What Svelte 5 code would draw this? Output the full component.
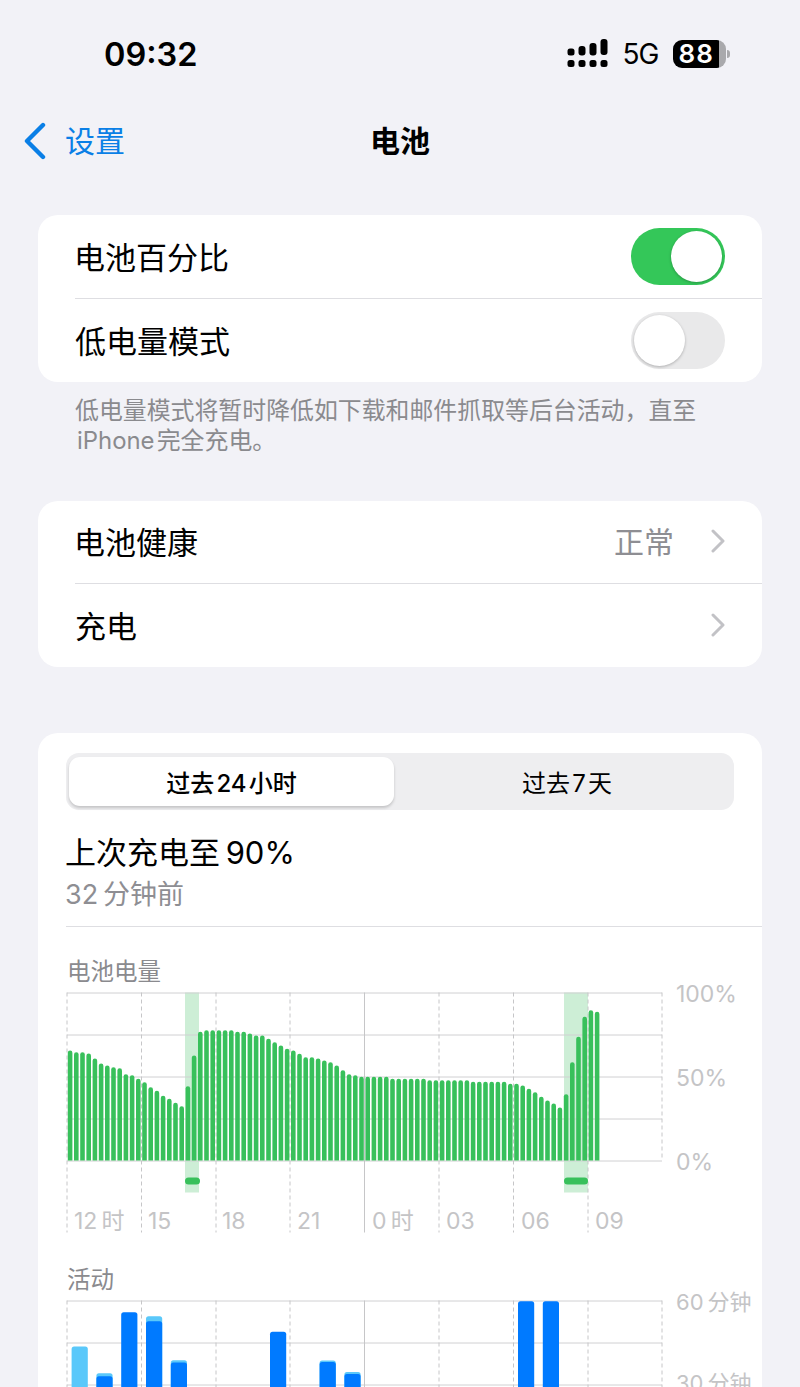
<script>
  // bar tops for the battery chart, one bar per 15 minutes
  const levelTops = [
    1051, 1052.7, 1052.7, 1054, 1059, 1064, 1066, 1067.7, 1068.7, 1074.7, 1075.7, 1079.3, 1082.7, 1087.7, 1091.3, 1096.3,
    1099.3, 1103.3, 1106.7, 1086.7, 1056, 1032.3, 1030.7, 1030.7, 1030.7, 1030.7, 1030.7, 1032.3, 1032.3, 1034, 1036, 1036,
    1039.3, 1042.7, 1046, 1049.3, 1051, 1054.3, 1057.7, 1057.7, 1059, 1061, 1062.7, 1066, 1070.7, 1074.7, 1075.7, 1077.3,
    1077.3, 1077.3, 1077.3, 1077.3, 1079.3, 1079.3, 1079.3, 1079.3, 1079.3, 1079.3, 1080.7, 1080.7, 1080.7, 1080.7, 1080.7,
    1080.7, 1080.7, 1082.3, 1082.3, 1082.3, 1082.3, 1082.3, 1082.3, 1084.3, 1084.3, 1086, 1089.3, 1092.7, 1097.3, 1101,
    1104, 1108, 1094.7, 1062.7, 1037.3, 1017.3, 1010.7, 1012.3
  ];
  const activity = [
    { i: 0, light: 1347, dark: null },
    { i: 1, light: 1373.7, dark: 1376.7 },
    { i: 2, light: null, dark: 1312.7 },
    { i: 3, light: 1316.7, dark: 1321.7 },
    { i: 4, light: 1360.7, dark: 1363 },
    { i: 8, light: null, dark: 1332.3 },
    { i: 10, light: 1361, dark: 1362.5 },
    { i: 11, light: 1372.5, dark: 1374.5 },
    { i: 18, light: null, dark: 1301.7 },
    { i: 19, light: null, dark: 1301.7 }
  ];
  const gridX = [67, 141.5, 216, 290, 364.5, 439, 513.5, 588, 662];
  const hours = [
    { x: 74, t: '12\u2009时' }, { x: 148, t: '15' }, { x: 222, t: '18' }, { x: 297, t: '21' },
    { x: 372, t: '0\u2009时' }, { x: 446, t: '03' }, { x: 521, t: '06' }, { x: 595, t: '09' }
  ];
</script>

<div class="page">
  <div class="status">
    <span class="time">09:32</span>
    <div class="status-right">
      <svg class="signal" width="42" height="30" viewBox="0 0 42 30">
        <g fill="#000">
          <rect x="0.5" y="9.5" width="7" height="7" rx="2.5" />
          <rect x="11.5" y="7" width="7" height="9.5" rx="3" />
          <rect x="22.5" y="4" width="7" height="12.5" rx="3" />
          <rect x="33.5" y="0" width="7" height="16" rx="3" />
          <rect x="0.5" y="21" width="7" height="7" rx="2.5" />
          <rect x="11.5" y="21" width="7" height="7" rx="2.5" />
          <rect x="22.5" y="21" width="7" height="7" rx="2.5" />
          <rect x="33.5" y="21" width="7" height="7" rx="2.5" />
        </g>
      </svg>
      <span class="net">5G</span>
      <div class="battery">
        <div class="battery-body"><span>88</span></div>
        <div class="battery-nub"></div>
      </div>
    </div>
  </div>

  <div class="nav">
    <div class="back">
      <svg width="24" height="38" viewBox="0 0 24 38">
        <path d="M20 3 L4 19 L20 35" fill="none" stroke="#0a7fe6" stroke-width="4.4" stroke-linecap="round" stroke-linejoin="round" />
      </svg>
      <span>设置</span>
    </div>
    <div class="title">电池</div>
    <div></div>
  </div>

  <div class="card">
    <div class="row first">
      <span class="label">电池百分比</span>
      <div class="toggle on"><i></i></div>
    </div>
    <div class="row">
      <span class="label">低电量模式</span>
      <div class="toggle"><i></i></div>
    </div>
  </div>
  <p class="note">低电量模式将暂时降低如下载和邮件抓取等后台活动，直至<br /><span class="note-end">iPhone&#8202;完全充电。</span></p>

  <div class="card health">
    <div class="row first">
      <span class="label">电池健康</span>
      <div class="value">
        <span class="label">正常</span>
        <svg width="14" height="24" viewBox="0 0 14 24"><path d="M2 2 L12 12 L2 22" fill="none" stroke="#c2c2c6" stroke-width="3" stroke-linecap="round" stroke-linejoin="round" /></svg>
      </div>
    </div>
    <div class="row">
      <span class="label">充电</span>
      <div class="value">
        <svg width="14" height="24" viewBox="0 0 14 24"><path d="M2 2 L12 12 L2 22" fill="none" stroke="#c2c2c6" stroke-width="3" stroke-linecap="round" stroke-linejoin="round" /></svg>
      </div>
    </div>
  </div>

  <div class="card usage">
    <div class="segments">
      <div class="seg active">过去&#8202;24&#8202;小时</div>
      <div class="seg">过去&#8202;7&#8202;天</div>
    </div>
    <div class="charged">
      <div class="charged-title">上次充电至&thinsp;90%</div>
      <div class="charged-sub">32&thinsp;分钟前</div>
    </div>
    <div class="chart-title level-title">电池电量</div>
    <svg class="chart" width="724" height="261" viewBox="38 982.5 724 261">
      <rect x="185" y="993" width="14" height="200" fill="#cdeed6" />
      <rect x="564" y="993" width="24" height="200" fill="#cdeed6" />
      {#each [993.5, 1035.5, 1077.5, 1119.5, 1161.5] as y}
        <line x1="67" x2="662" y1={y} y2={y} stroke="#d0d0d2" stroke-width="1" />
      {/each}
      {#each gridX as x, n}
        <line x1={x} x2={x} y1="993" y2={n === 8 ? 1161 : 1233} stroke="#c6c6c8" stroke-width="1" stroke-dasharray={n === 4 ? 'none' : '4 3'} />
      {/each}
      {#each levelTops as top, i}
        <path d="M{67.8 + i * 6.2} 1161 V{top + 2.3} a2.3 2.3 0 0 1 4.6 0 V1161 Z" fill="#38c05b" />
      {/each}
      <rect x="185" y="1178" width="15" height="7" rx="3.5" fill="#38c05b" />
      <rect x="564" y="1178" width="24" height="7" rx="3.5" fill="#38c05b" />
      <text class="axis" x="676" y="1002">100%</text>
      <text class="axis" x="676" y="1086">50%</text>
      <text class="axis" x="676" y="1170">0%</text>
      {#each hours as h}
        <text class="axis" x={h.x} y="1229">{h.t}</text>
      {/each}
    </svg>
    <div class="chart-title activity-title">活动</div>
    <svg class="chart" width="724" height="110" viewBox="38 1290.5 724 110">
      {#each [1301.5, 1343.5, 1385.5] as y}
        <line x1="67" x2="662" y1={y} y2={y} stroke="#d0d0d2" stroke-width="1" />
      {/each}
      {#each gridX as x, n}
        <line x1={x} x2={x} y1="1301" y2="1396" stroke="#c6c6c8" stroke-width="1" stroke-dasharray={n === 4 ? 'none' : '4 3'} />
      {/each}
      {#each activity as b}
        {#if b.light}
          <rect x={71.6 + b.i * 24.8} y={b.light} width="16.2" height={1400 - b.light} rx="2.5" fill="#5ac8fa" />
        {/if}
        {#if b.dark}
          <rect x={71.6 + b.i * 24.8} y={b.dark} width="16.2" height={1400 - b.dark} rx="2.5" fill="#007aff" />
        {/if}
      {/each}
      <text class="axis minutes" x="676" y="1310">60&thinsp;分钟</text>
      <text class="axis minutes" x="676" y="1391">30&thinsp;分钟</text>
    </svg>
  </div>
</div>

<style>
  :global(body) {
    margin: 0;
    background: #f2f2f7;
  }

  .page {
    height: 1387px;
    overflow: hidden;
    background: #f2f2f7;
    font-family: Inter, "Noto Sans CJK SC", sans-serif;
    color: #000;
  }

  .status {
    height: 107px;
    display: flex;
    justify-content: space-between;
    align-items: center;
    padding: 0 70px 0 104px;
    box-sizing: border-box;
  }

  .time {
    font-size: 32.5px;
    font-weight: 600;
    margin-top: 2px;
  }

  .status-right {
    display: flex;
    align-items: center;
  }

  .signal {
    margin-right: 14px;
  }

  .net {
    font-size: 28px;
    font-weight: 400;
    margin-right: 14px;
    letter-spacing: -1px;
  }

  .battery {
    display: flex;
    align-items: center;
  }

  .battery-body {
    width: 53px;
    height: 28px;
    box-sizing: border-box;
    border-radius: 9px;
    background: linear-gradient(to right, #000 86%, #a9a9ac 86%);
    color: #fff;
    font-size: 26px;
    font-weight: 600;
    line-height: 28px;
    padding-left: 6px;
    letter-spacing: 1px;
  }

  .battery-nub {
    width: 3px;
    height: 8px;
    margin-left: 1.5px;
    background: #a9a9ac;
    border-radius: 0 4px 4px 0;
  }

  .nav {
    height: 68px;
    display: grid;
    grid-template-columns: 1fr auto 1fr;
    align-items: center;
  }

  .back {
    display: flex;
    align-items: center;
    gap: 18px;
    margin-left: 23px;
    color: #0a7fe6;
    font-size: 30px;
  }

  .back span,
  .title {
    margin-bottom: 4px;
  }

  .title {
    font-size: 30px;
    font-weight: 600;
  }

  .card {
    margin: 40px 38px 0;
    background: #fff;
    border-radius: 20px;
    overflow: hidden;
  }

  .row {
    height: 83px;
    margin-left: 37px;
    padding-right: 37px;
    display: flex;
    align-items: center;
    justify-content: space-between;
    font-size: 31px;
  }

  .row.first {
    height: 83px;
    border-bottom: 1px solid #dedee2;
  }

  .label {
    margin-bottom: 2px;
  }

  .row.first > .label {
    margin-left: -1px;
  }

  .toggle {
    width: 94px;
    height: 57px;
    border-radius: 29px;
    background: #e9e9ea;
    position: relative;
  }

  .toggle.on {
    background: #34c759;
  }

  .toggle i {
    position: absolute;
    top: 3px;
    left: 3px;
    width: 51px;
    height: 51px;
    border-radius: 50%;
    background: #fff;
    box-shadow: 0 1px 3px rgba(0, 0, 0, 0.25);
  }

  .toggle.on i {
    left: 40px;
  }

  .note {
    margin: 14px 38px 0 75px;
    font-size: 23.9px;
    line-height: 30px;
    color: #8a8a8e;
  }

  .note-end {
    margin-left: 2px;
  }

  .card.health {
    margin-top: 45px;
  }

  .health .row {
    height: 83px;
  }

  .health .row.first {
    height: 82px;
  }

  .health .label {
    margin-bottom: 3px;
  }

  .value {
    display: flex;
    align-items: center;
    gap: 37px;
    color: #8e8e93;
    font-size: 30px;
    margin-bottom: 2px;
  }

  .card.usage {
    margin-top: 66px;
    height: 800px;
    padding-top: 20px;
    box-sizing: border-box;
  }

  .segments {
    margin: 0 28px;
    height: 57px;
    padding: 4px 3px;
    box-sizing: border-box;
    background: #eeeef0;
    border-radius: 13px;
    display: grid;
    grid-template-columns: 325px 1fr;
  }

  .seg {
    display: flex;
    align-items: center;
    justify-content: center;
    font-size: 24px;
    font-weight: 400;
    padding-left: 9px;
  }

  .seg.active {
    background: #fff;
    border-radius: 11px;
    box-shadow: 0 2px 3px rgba(0, 0, 0, 0.18);
    font-weight: 500;
    padding-left: 0;
  }

  .charged {
    margin: 22px 0 0 28px;
    padding-bottom: 12px;
    border-bottom: 1px solid #dedee2;
  }

  .charged-title {
    font-size: 31px;
    line-height: 42px;
    margin-left: -1px;
  }

  .charged-sub {
    font-size: 27px;
    line-height: 38px;
    margin-top: 2px;
    margin-left: -1px;
    color: #8e8e93;
  }

  .chart-title {
    margin-left: 29px;
    font-size: 23.5px;
    line-height: 20px;
    color: #8a8a8e;
  }

  .level-title {
    margin-top: 35px;
  }

  .activity-title {
    margin-top: 27px;
  }

  .chart {
    display: block;
  }

  .axis {
    font-size: 23px;
    fill: #c4c4c6;
  }

  .axis.minutes {
    font-size: 22px;
  }
</style>
